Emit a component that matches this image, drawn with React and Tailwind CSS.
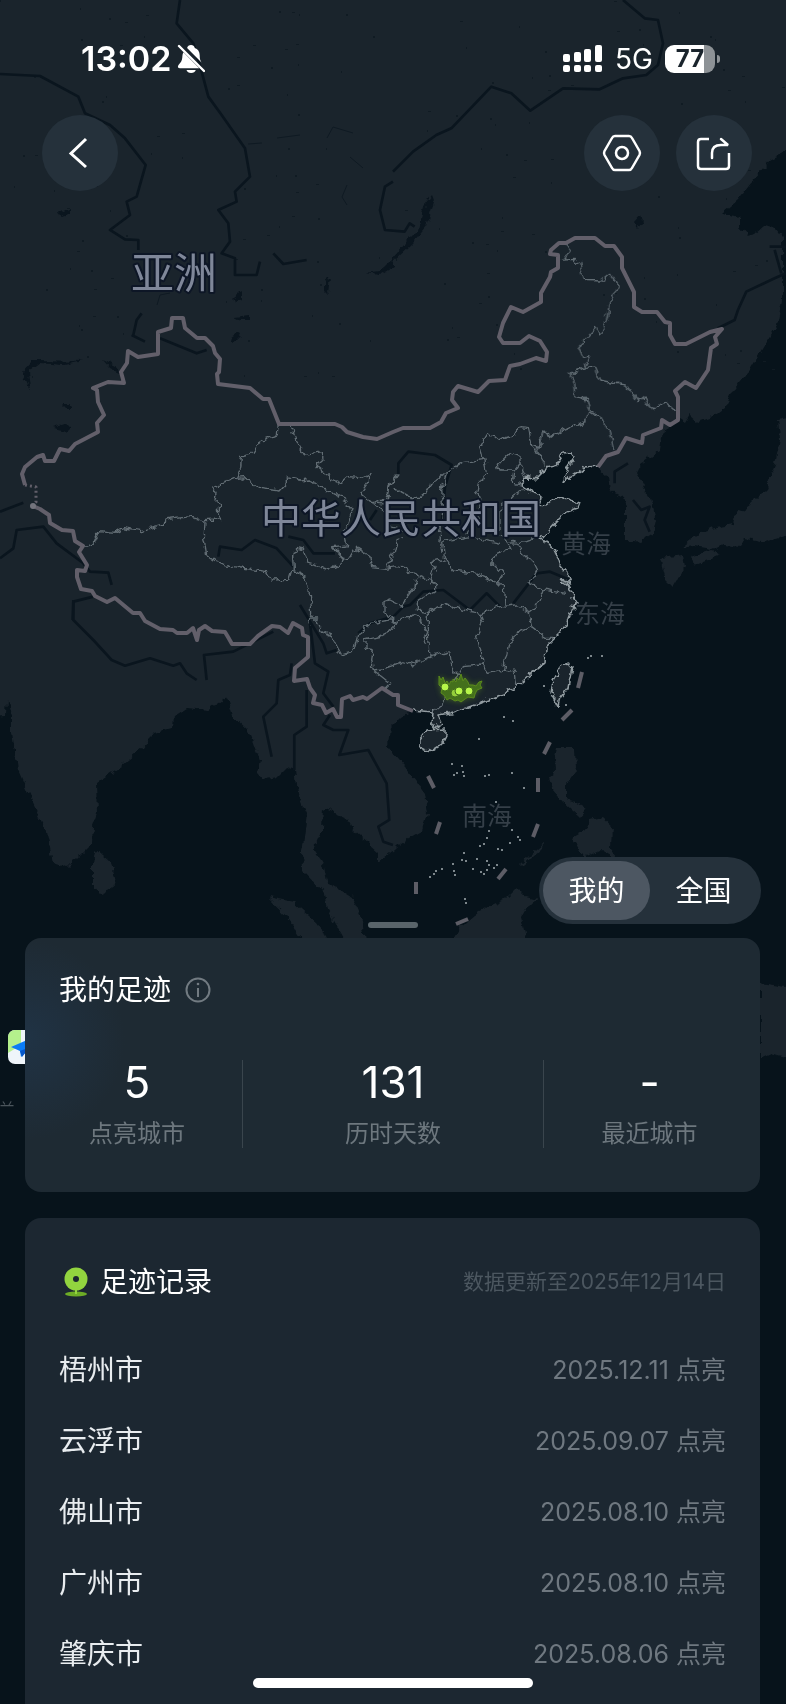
import { useState } from 'react'

const LAND = [
    // mainland
    'M-20,-20 806,-20 806,140 770,160 755,178 738,200 722,214 740,217 740,228 747,236 755,234 765,225 775,228 783,238 783,300 778,325 765,345 750,370 735,388 725,407 710,418 698,422 690,415 685,423 680,420 663,430 660,450 640,465 636,473 650,497 656,520 653,533 640,542 626,540 626,507 623,497 610,490 608,477 597,467 585,468 563,482 568,467 575,457 571,452 563,453 556,465 546,467 533,480 526,477 523,485 526,490 536,493 541,498 539,505 546,506 558,496 580,503 578,508 566,512 556,522 541,539 555,548 560,565 571,578 566,585 573,592 575,602 568,620 560,633 546,647 545,662 530,675 516,687 503,694 483,702 466,708 450,713 438,715 441,723 436,728 432,722 433,712 413,710 400,718 390,728 388,747 393,753 410,773 425,793 428,813 423,830 400,843 393,850 378,862 378,852 353,830 347,818 323,808 322,830 313,850 325,867 328,882 353,897 362,920 365,940 345,940 328,910 325,893 303,870 302,853 307,813 298,793 295,770 287,767 277,777 263,780 257,773 260,760 250,733 233,717 227,697 207,710 187,708 173,717 172,728 153,733 143,747 120,767 97,782 98,813 93,827 92,843 80,855 67,868 53,863 47,833 30,797 18,770 12,733 12,717 7,700 6,715 -20,717Z',
    // islands
    'M95,850 110,863 116,878 113,888 100,894 93,888 93,863Z',
    'M268,897 293,902 317,923 332,945 305,945 287,917Z',
    'M450,945 460,927 480,910 503,900 516,887 526,897 538,900 526,908 521,917 528,945Z',
    'M556,748 575,748 576,770 566,785 566,797 586,810 580,817 563,802 553,790 549,777 555,772 554,757Z',
    'M590,820 602,817 612,826 611,850 620,862 600,850 584,858 572,838 586,830Z',
    'M520,864 545,842 542,848 522,866Z',
    'M806,415 778,420 780,440 775,465 765,490 750,505 735,515 733,525 715,528 700,533 690,540 680,548 695,546 712,549 723,544 740,546 746,538 765,542 806,530Z',
    'M660,558 683,555 685,567 673,587 666,580Z',
    'M690,557 713,550 720,555 696,565Z',
    'M760,983 806,990 806,1063 771,1053 760,1058Z',
    'M566,664 572,667 568,687 560,697 558,707 551,693 553,680 560,668Z',
    'M426,730 446,729 446,735 441,745 430,752 420,747 420,738Z',
]

const COAST = [
    'M598,467 585,468 563,482 568,467 575,457 571,452 563,453 556,465 546,467 533,480 526,477 523,485 526,490 536,493 541,498 539,505 546,506 558,496 580,503 578,508 566,512 556,522 541,539 555,548 560,565 571,578 566,585 573,592 575,602 568,620 560,633 546,647 545,662 530,675 516,687 503,694 483,702 466,708 450,713 438,715 441,723 436,728 432,722 433,712 413,710',
    'M566,664 572,667 568,687 560,697 558,707 551,693 553,680 560,668Z',
    'M426,730 446,729 446,735 441,745 430,752 420,747 420,738Z',
]

const BORDER_NORTH =
    'M25,485 22,474 25,467 37,457 43,455 45,461 54,461 60,449 69,451 75,444 98,432 97,423 104,415 98,402 97,390 93,388 108,382 124,383 121,372 127,363 128,351 138,357 158,354 158,332 171,328 172,318 183,318 185,328 197,338 205,338 213,346 215,353 220,359 219,372 217,374 218,384 250,388 263,399 269,399 279,424 335,424 342,427 347,432 363,437 377,439 393,432 403,428 430,428 441,422 446,413 458,408 452,400 453,392 458,386 478,392 489,381 505,380 510,366 520,364 536,358 546,361 547,352 540,341 529,336 520,343 503,343 499,337 503,323 511,307 523,312 541,302 541,293 550,277 551,272 558,268 558,255 550,254 551,250 559,243 566,243 575,238 595,238 605,246 614,246 622,257 622,268 628,280 634,292 634,307 642,312 657,312 665,322 670,323 670,335 675,344 686,344 710,332 722,329 715,337 717,344 711,348 708,370 696,388 685,382 675,391 678,397 678,420 670,425 662,420 661,428 643,435 642,443 626,438 618,452 606,456 598,467'

const BORDER_SOUTH =
    'M33,506 40,509 49,515 50,523 62,530 73,531 75,541 83,546 79,552 87,565 85,571 77,570 77,577 81,589 92,591 95,596 107,602 115,598 133,613 140,613 145,621 160,629 173,630 177,633 187,633 193,628 197,640 199,630 205,626 212,631 225,632 228,637 232,644 250,644 258,636 272,626 280,627 288,633 293,623 302,628 303,635 308,637 308,657 295,668 294,681 307,679 310,688 315,695 313,703 322,705 326,713 333,709 337,717 341,717 342,699 350,696 353,700 363,697 367,699 382,688 393,695 398,695 398,705 413,711'

// Line work is grouped by map tile; each tile has its own origin and is drawn at 3x
const PROVINCES = [
    {
        origin: 'translate(0 300) scale(0.3333)',
        lines: [
            'M835,372 832,405 800,418 770,437 752,463 725,470 722,500 707,535 633,565 648,580 645,600 665,620 652,632 662,660 612,662 565,650 495,660 490,675 425,692 370,683 345,697 297,692 280,730 250,737',
            'M612,662 610,700 620,765 650,785 700,800 750,808 800,815 815,840 870,838 880,805 878,770 890,745 910,750 925,790 985,808 1020,790 1025,770 995,740 1040,735',
            'M707,535 735,533 775,565 840,573 862,550 862,530 900,540 925,537 965,565 1000,580 1040,600 1055,640 1035,700 1040,735',
            'M870,370 890,430 910,463 970,455 972,475 948,497 1000,540 1022,550 1045,530 1080,532 1107,518 1105,545 1080,580 1110,605 1160,600 1170,550 1195,520',
            'M880,808 905,820 930,870 935,940 925,970',
        ],
    },
    {
        origin: 'translate(270 420) scale(0.3333)',
        lines: [
            'M185,380 215,415 245,410 260,385 300,410 305,440 350,445 385,440 440,465 500,490 500,515 470,525 445,540 445,570 475,575',
            'M305,245 350,250 360,195 385,165 M375,205 430,235 455,235 480,195 530,160 515,210 520,250 512,340 510,365',
            'M305,245 345,280 360,320 400,330 M400,350 380,355 370,400 350,440',
            'M530,160 580,125 640,115 650,160 625,190 620,215 635,245 625,300 590,340',
            'M640,115 630,80 655,38 680,60 735,45 750,20 775,22 785,70 805,80 815,30 840,50 880,30 950,0 M785,70 800,100 830,130',
            'M690,150 685,130 720,95 750,105 750,130 735,150Z M750,130 770,170 755,195 730,190 735,150',
            'M765,205 730,225 690,270 690,330 M690,345 715,370 770,365 810,350',
            'M510,365 600,350 690,370 M515,365 520,410 550,450 620,460 690,490',
            'M715,375 720,385 680,400 665,430 700,460 680,490 700,500 705,555',
            'M730,360 760,400 790,430 800,450 780,490 820,510 850,515 890,520',
            'M820,510 800,560 775,580 785,620 830,655 855,655',
            'M475,575 530,550 575,570 630,580 690,560 740,555 780,575',
            'M520,420 485,425 495,440 480,490 M475,575 475,640 480,710',
            'M375,605 345,580 345,545 360,540 390,555 435,500 440,470',
            'M375,605 430,585 450,600 470,640 460,665 475,670',
            'M375,605 360,635 330,650 285,660 285,685 310,690 305,720 310,750 345,745 400,725 430,735 480,710 540,695 545,740 565,765 580,740 635,735 655,760 700,750 735,755 740,795',
            'M120,600 140,600 160,640 185,650 215,705 250,695 265,640 300,610 360,600 375,605',
            'M310,750 360,790 345,805 M630,580 640,610 620,650 635,700 635,735',
            'M785,620 740,640 715,680 700,750 M565,765 545,800 520,850 490,875',
        ],
    },
    {
        origin: 'translate(393 220) scale(0.3333)',
        lines: [
            'M520,68 530,90 512,120 540,118 560,130 570,178 625,180 650,160 675,195 650,250 640,300 620,345 610,325 555,380 570,415 590,410 575,440 530,460 545,490 548,530 580,540 590,575 575,605 500,630 470,655 450,630 445,665 430,690 460,735',
            'M575,440 605,445 620,480 700,495 735,545 755,530 775,570 820,550 850,575',
            'M590,575 630,600 650,640 662,690',
        ],
    },
]

const RIVERS = [
    {
        origin: 'translate(0 0) scale(0.3333)',
        lines: [
            'M540,0 530,70 580,130 605,215 625,290 665,345 735,445 750,530 705,575 710,605 655,630 685,670 690,725 665,760 705,775 705,825 770,825 780,785',
            'M0,222 120,228 235,290 255,340 330,375 375,415 437,495 410,590 380,605 390,645 330,690 375,718 415,720 415,750',
            'M1179,545 1155,560 1140,630 1155,690 1214,695 1229,670 1244,680 M820,760 850,792 920,780',
        ],
    },
    {
        origin: 'translate(393 0) scale(0.3333)',
        lines: [
            'M0,515 60,455 130,405 175,385 295,260 355,280 412,332 510,265 620,268 690,235 760,225 795,195 810,130 795,60 755,55 690,0',
            'M1179,820 1145,835 1060,875 1035,930 1025,960 975,985 M1130,740 1179,740 M1165,820 1145,750',
        ],
    },
    {
        origin: 'translate(0 300) scale(0.3333)',
        lines: [
            'M0,775 40,745 50,690 130,680 170,730 250,790 270,815 325,818 335,855',
            'M0,635 70,608 M280,890 220,905 218,960 M480,115 590,160 620,150',
            'M655,770 660,740 725,750 765,720 830,745 880,800 M400,105 410,60 425,40 M395,105 435,125',
        ],
    },
    {
        origin: 'translate(0 600) scale(0.3333)',
        lines: [
            'M220,0 220,60 280,120 335,180 375,197 450,175 520,197 540,190 560,220 590,240',
            'M620,240 612,165 700,155 820,95',
            'M875,190 870,225 835,240 830,310 790,350 815,470 M920,270 920,380 883,405 883,510',
            'M900,15 970,130 980,160 1010,150 M930,70 945,190 985,215 970,280 1000,320',
            'M990,345 970,375 1000,390 1045,390 1018,465 1105,450 1160,550 1168,660 1135,680 1150,725 1179,735',
        ],
    },
    {
        origin: 'translate(270 420) scale(0.3333)',
        lines: [
            'M385,165 385,130 415,95 495,105 545,135 525,200 515,310',
            'M265,640 300,610 370,590 400,560 420,555 460,515 520,510 600,570 650,520 690,560',
            'M730,550 800,460 840,455 900,480 M55,350 100,360 130,400 195,400 M300,300 320,270',
            'M1034,190 1034,155 1074,130 M1089,240 1114,270 1139,260 1124,300 1139,335',
        ],
    },
]

const FAINT_STREAMS = 'M347,185 342,197 347,205 M350,157 363,168 M327,138 333,127 353,133 M277,138 300,135 M157,305 160,295 170,293 M248,144 262,143'

const LAKES = [
    'M431,195 434,203 426,227 413,243 393,262 393,257 403,245 418,230 425,203Z',
    'M365,273 380,271 393,260 393,267 380,275Z',
    'M22,372 33,360 83,361 63,365 40,363 28,372 30,390Z',
    'M103,360 117,367 118,372 110,368Z',
    'M53,428 63,425 72,426 67,431Z',
    'M57,214 70,208 70,214 62,217Z',
    'M634,222 641,214 643,222 638,228Z',
    'M325,280 330,277 328,293 325,290Z',
    'M234,297 242,291 242,300 236,303Z',
    'M230,338 238,332 240,336 232,341Z',
    'M234,317 250,315 250,320 240,320Z',
    'M62,405 72,405 71,408 65,408Z',
]

// South China Sea dash line, [x1, y1, x2, y2]
const DASHES = [
    [582, 672, 578, 688],
    [572, 710, 562, 720],
    [550, 742, 544, 754],
    [538, 778, 538, 792],
    [428, 776, 434, 788],
    [440, 822, 436, 834],
    [538, 824, 533, 837],
    [506, 869, 498, 879],
    [416, 882, 416, 894],
    [456, 924, 468, 919],
]

const ISLETS = [
    [588, 658], [591, 656], [602, 656], [544, 686], [566, 705], [504, 717], [513, 721], [479, 739],
    [452, 764], [454, 775], [457, 773], [462, 766], [463, 772], [464, 776], [485, 776], [489, 775],
    [512, 773], [524, 788], [496, 802], [489, 831], [487, 838], [512, 830], [518, 837], [520, 840],
    [480, 846], [484, 844], [510, 843], [498, 849], [502, 850], [464, 853], [462, 860], [466, 861],
    [477, 859], [487, 861], [453, 864], [454, 871], [455, 875], [473, 869], [481, 872], [484, 874],
    [487, 870], [489, 865], [497, 865], [494, 868], [430, 877], [434, 874], [436, 871], [442, 869],
    [465, 899], [466, 903],
]

const LIT_AREA =
    'M439,676 441,680 443,677 445,683 447,681 449,685 451,681 453,682 453,679 456,682 457,678 459,680 461,674 463,681 465,678 468,682 469,685 473,685 476,686 479,682 482,681 480,685 482,688 477,690 475,694 474,698 468,697 465,699 461,702 458,700 455,701 450,698 447,700 444,695 441,693 442,688 439,685Z'

const CITY_DOTS = [
    [455, 693, 0.7],
    [445, 687, 1],
    [459, 691, 1],
    [469, 691, 1],
]

const SPECKS = Array.from({ length: 170 }, (_, i) => ({
    x: (i * 197 + ((i * i * 31) % 113)) % 786,
    y: (i * 71 + ((i * i * 17) % 89)) % 380,
    w: 1 + (i % 3),
}))

const STATS = [
    { label: '点亮城市', value: '5' },
    { label: '历时天数', value: '131' },
    { label: '最近城市', value: '-' },
]

const RECORDS = [
    { city: '梧州市', date: '2025.12.11' },
    { city: '云浮市', date: '2025.09.07' },
    { city: '佛山市', date: '2025.08.10' },
    { city: '广州市', date: '2025.08.10' },
    { city: '肇庆市', date: '2025.08.06' },
]

function MapBackground() {
    return (
        <svg
            viewBox="0 0 786 1704"
            className="absolute inset-x-0 top-0 w-full h-auto font-['Noto_Sans_CJK_SC',sans-serif]"
            fill="none"
            strokeLinejoin="round"
            aria-hidden="true"
        >
            <defs>
                <filter id="rough" x="-20" y="-20" width="826" height="1744" filterUnits="userSpaceOnUse" colorInterpolationFilters="sRGB">
                    <feTurbulence type="fractalNoise" baseFrequency="0.14" numOctaves="2" seed="4" />
                    <feDisplacementMap in="SourceGraphic" scale="8" xChannelSelector="R" yChannelSelector="G" />
                </filter>
                <filter id="glow" x="-50%" y="-50%" width="200%" height="200%" colorInterpolationFilters="sRGB">
                    <feGaussianBlur stdDeviation="3" />
                </filter>
                <clipPath id="labelTop">
                    <rect x="0" y="1100" width="20" height="8" />
                </clipPath>
                <clipPath id="appIcon">
                    <rect x="8" y="1030" width="34" height="34" rx="7" />
                </clipPath>
            </defs>

            <g fill="#1a242c" filter="url(#rough)">
                {LAND.map((d) => <path key={d} d={d} />)}
            </g>

            <g fill="#0a151e" filter="url(#rough)">
                {LAKES.map((d) => <path key={d} d={d} />)}
            </g>
            <path d={FAINT_STREAMS} stroke="#0f1a23" strokeWidth="1" />
            <g fill="#101b23">
                {SPECKS.map(({ x, y, w }, i) => <rect key={i} x={x} y={y} width={w} height={w > 2 ? 1 : 2} />)}
            </g>

            {RIVERS.map(({ origin, lines }) => (
                <g key={origin} transform={origin} stroke="#0a151e" strokeWidth="8">
                    {lines.map((d) => <path key={d} d={d} />)}
                </g>
            ))}

            <g filter="url(#rough)">
                {PROVINCES.map(({ origin, lines }) => (
                    <g key={origin} transform={origin} stroke="#626d74" strokeWidth="4">
                        {lines.map((d) => <path key={d} d={d} />)}
                    </g>
                ))}
            </g>
            <g stroke="#929ca1" strokeWidth="1.500" filter="url(#rough)">
                {COAST.map((d) => <path key={d} d={d} />)}
                <path d="M562,580 571,584 M563,583 571,588 M572,598 576,604 M571,606 575,610 M528,674 545,663 M483,701 478,704" strokeWidth="2" />
            </g>

            <g stroke="#625f6a" strokeWidth="4">
                <path d={BORDER_NORTH} />
                <path d={BORDER_SOUTH} />
                <path d="M25,485 36,487 36,502 33,506" strokeWidth="3" strokeDasharray="2 3" />
            </g>
            <circle cx="33" cy="506" r="3" fill="#74747d" />
            <g stroke="#5d5d66" strokeWidth="4">
                {DASHES.map(([x1, y1, x2, y2]) => (
                    <line key={`${x1}-${y1}`} x1={x1} y1={y1} x2={x2} y2={y2} />
                ))}
            </g>
            <g fill="#a5aeb2">
                {ISLETS.map(([x, y]) => <circle key={`${x}-${y}`} cx={x} cy={y} r="1" />)}
            </g>

            {/* lit cities */}
            <path d={LIT_AREA} fill="#8ad01c" opacity="0.4" filter="url(#glow)" />
            <path d={LIT_AREA} fill="#44701c" stroke="#5b8a1c" strokeWidth="1" strokeLinejoin="miter" />
            {CITY_DOTS.map(([x, y, opacity]) => (
                <circle key={x} cx={x} cy={y} r="4" fill="#b6f649" stroke="#416b1b" strokeWidth="1" opacity={opacity} />
            ))}

            <g fill="#7f8799" stroke="#0d1626" strokeWidth="4" paintOrder="stroke">
                <text x="131" y="289" fontSize="43">亚洲</text>
                <text x="261" y="533" fontSize="40">中华人民共和国</text>
            </g>
            <g fill="#353f48" fontSize="25">
                <text x="561" y="553">黄海</text>
                <text x="575" y="623">东海</text>
                <text x="462" y="825">南海</text>
            </g>
            <text x="-1" y="1115" fontSize="16" fill="#4a545b" clipPath="url(#labelTop)">兰</text>

            <g clipPath="url(#appIcon)">
                <rect x="8" y="1030" width="34" height="34" fill="#eff5fa" />
                <path d="M8,1030H21V1045L8,1053Z" fill="#b4f08c" />
                <path d="M11,1047 34,1037V1062L26,1052 21,1057 20,1051Z" fill="#0b7cf5" />
                <path d="M20,1051 30,1047 22,1057Z" fill="#0757c9" />
            </g>
        </svg>
    )
}

function StatusBar() {
    return (
        <header className="flex items-center justify-between pt-[41px] pl-[81px] pr-[66px]">
            <div className="flex items-center gap-1.5">
                <span className="text-[34px] leading-9 font-semibold">13:02</span>
                <svg width="28" height="30" viewBox="0 0 28 30" aria-label="静音">
                    <path d="M14 1c-2 0-3.500 1.200-3.900 2.900L24.500 18.500c-1.300-1.700-1.800-3.600-1.800-7.200 0-4.100-2-6.500-4.900-7.400C17.400 2.200 16 1 14 1ZM6.500 8.200C5.500 10 5.400 11.500 5.300 13.500 5.100 17 3.500 18.500 1.500 21c-1.200 1.700-.6 3.200 1.500 3.200h19.300ZM9.500 26h9.300c-.6 1.900-2.400 3-4.700 3s-4-1.100-4.600-3Z" fill="#fff" />
                    <path d="M2 2 27 27" stroke="#fff" strokeWidth="2.400" strokeLinecap="round" />
                </svg>
            </div>
            <div className="flex items-center gap-3">
                <svg width="40" height="28" viewBox="0 0 40 28" fill="#fff" aria-label="信号">
                    <rect x="0" y="9" width="7" height="8" rx="2" />
                    <rect x="11" y="7" width="7" height="10" rx="2" />
                    <rect x="21" y="4" width="7" height="13" rx="2" />
                    <rect x="32" y="0" width="7" height="17" rx="2" />
                    <rect x="0" y="20" width="7" height="7" rx="2" />
                    <rect x="11" y="20" width="7" height="7" rx="2" />
                    <rect x="21" y="20" width="7" height="7" rx="2" />
                    <rect x="32" y="20" width="7" height="7" rx="2" />
                </svg>
                <span className="text-[28px] leading-9">5G</span>
                <div className="flex items-center gap-0.5">
                    <div className="flex h-7 w-[50px] items-center justify-center rounded-[9px] bg-linear-to-r from-white from-78% to-[#8d9296] to-78% text-2xl font-bold text-[#1a242c]">
                        77
                    </div>
                    <div className="h-2 w-[3px] rounded-r-full bg-[#8d9296]" />
                </div>
            </div>
        </header>
    )
}

function RoundButton({ label, children }) {
    return (
        <button type="button" aria-label={label} className="flex size-[76px] items-center justify-center rounded-full bg-[#25313b]">
            <svg width="40" height="40" viewBox="0 0 40 40" fill="none" stroke="#fff" strokeWidth="2.500" strokeLinejoin="round">
                {children}
            </svg>
        </button>
    )
}

function ScopeToggle() {
    const [scope, setScope] = useState('我的')

    return (
        <div className="mr-[25px] flex h-[67px] items-center self-end rounded-full bg-[#25313b] p-1">
            {['我的', '全国'].map((name) => (
                <button
                    key={name}
                    type="button"
                    aria-pressed={scope === name}
                    onClick={() => setScope(name)}
                    className={`h-[59px] w-[107px] rounded-full text-[28px] leading-8 ${scope === name ? 'bg-[#4d5762]' : ''}`}
                >
                    {name}
                </button>
            ))}
        </div>
    )
}

export default function App() {
    return (
        <div className="relative flex min-h-screen flex-col overflow-hidden bg-[#07131b] font-['Inter','Noto_Sans_CJK_SC',sans-serif] text-white">
            <MapBackground />

            <div className="relative flex grow flex-col">
                <StatusBar />

                <nav className="mt-[38px] flex justify-between pl-[42px] pr-[34px]">
                    <RoundButton label="返回">
                        <path d="M26 6 11 20.500 26 34" strokeWidth="3" strokeLinejoin="miter" />
                    </RoundButton>
                    <div className="flex gap-4">
                        <RoundButton label="设置">
                            <path d="M13 3H27Q29 3 30 5L37.500 18Q38.500 20 37.500 22L30 35Q29 37 27 37H13Q11 37 10 35L2.500 22Q1.500 20 2.500 18L10 5Q11 3 13 3Z" />
                            <circle cx="20" cy="20" r="6" />
                        </RoundButton>
                        <RoundButton label="分享">
                            <path d="M15 6H7Q4 6 4 9V33Q4 36 7 36H32Q35 36 35 33V20" />
                            <path d="M18 25V20Q18 12 27 12H34L27 6" strokeLinejoin="bevel" strokeLinecap="round" />
                        </RoundButton>
                    </div>
                </nav>

                <div className="mt-[666px] flex flex-col">
                    <ScopeToggle />
                    <div className="-mt-0.5 h-1.5 w-[50px] self-center rounded-full bg-[#59646a]" />
                </div>

                <section className="ml-[25px] mr-[26px] mt-[10px] rounded-2xl bg-[#1e2a33] bg-[radial-gradient(circle_at_0_40%,#203345_0,#1e2a3300_100px)] pb-11">
                    <h2 className="flex items-center gap-3.5 px-[34px] pt-9 text-[28px] leading-8">
                        我的足迹
                        <button type="button" aria-label="说明">
                            <svg width="26" height="26" viewBox="0 0 26 26" fill="none" stroke="#727b82" strokeWidth="2">
                                <circle cx="13" cy="13" r="11.500" />
                                <path d="M13 11V20" />
                                <circle cx="13" cy="7" r="1.300" fill="#727b82" stroke="none" />
                            </svg>
                        </button>
                    </h2>
                    <dl className="mt-[54px] grid grid-cols-[7fr_10fr_7fr] divide-x divide-[#3a454d] pl-[7px] pr-[5px]">
                        {STATS.map(({ label, value }) => (
                            <div key={label} className="flex flex-col-reverse items-center gap-4">
                                <dt className="text-2xl leading-7 text-[#6d777e]">{label}</dt>
                                <dd className="text-[44px] leading-11">{value}</dd>
                            </div>
                        ))}
                    </dl>
                </section>

                <section className="ml-[25px] mr-[26px] mt-[26px] grow rounded-t-2xl bg-[#1c2731] px-[34px]">
                    <div className="flex items-center justify-between pt-12">
                        <h2 className="flex items-center gap-[11px] text-[28px] leading-8">
                            <svg width="30" height="30" viewBox="0 0 30 30" aria-hidden="true">
                                <ellipse cx="17" cy="27" rx="11" ry="2.500" fill="#6dac26" />
                                <circle cx="17" cy="12" r="11.500" fill="#92d43f" />
                                <path d="M16 20h2v7h-2Z" fill="#92d43f" />
                                <circle cx="17" cy="12" r="3" fill="#1c2731" />
                            </svg>
                            足迹记录
                        </h2>
                        <p className="text-[21px] leading-8 text-[#4c5760]">数据更新至2025年12月14日</p>
                    </div>
                    <ul className="mt-9">
                        {RECORDS.map(({ city, date }) => (
                            <li key={city} className="flex h-[71px] items-center justify-between">
                                <span className="text-[28px] leading-8 text-[#e8ecef]">{city}</span>
                                <span className="text-[25px] leading-8 text-[#6f7880]">{date} 点亮</span>
                            </li>
                        ))}
                    </ul>
                </section>
            </div>

            {/* home indicator */}
            <div className="absolute bottom-4 left-1/2 h-2.5 w-[280px] -translate-x-1/2 rounded-full bg-white" />
        </div>
    )
}
